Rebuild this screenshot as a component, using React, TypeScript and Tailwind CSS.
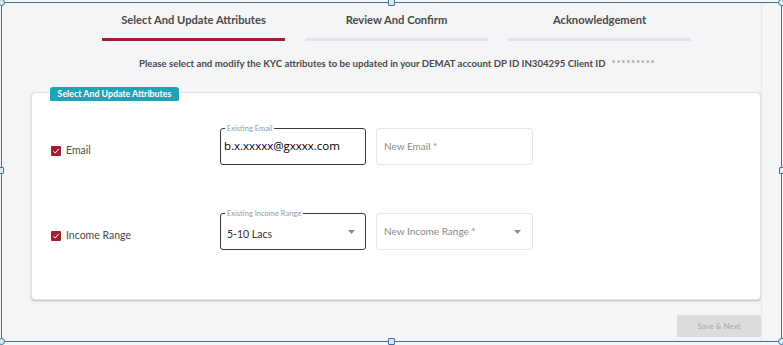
import React from "react";

type Tab = { label: string; active: boolean };

const tabs: Tab[] = [
  { label: "Select And Update Attributes", active: true },
  { label: "Review And Confirm", active: false },
  { label: "Acknowledgement", active: false },
];

function Caret() {
  return (
    <svg width="7" height="4" viewBox="0 0 7 4" className="shrink-0">
      <path d="M0 0 L7 0 L3.5 4 Z" fill="#8c8c8c" />
    </svg>
  );
}

function CheckBox() {
  return (
    <div className="w-[10px] h-[10px] bg-[#a51c30] rounded-[1px] flex items-center justify-center">
      <svg width="8" height="8" viewBox="0 0 8 8">
        <path d="M1.3 4.2 L3.2 6 L6.8 1.8" stroke="#fff" strokeWidth="1" fill="none" />
      </svg>
    </div>
  );
}

function Handle({ className, round }: { className: string; round?: boolean }) {
  return (
    <div
      className={`absolute w-[7px] h-[7px] border border-[#41719c] bg-[#dbeaf7] ${round ? "rounded-full" : "rounded-[1px]"} ${className}`}
    />
  );
}

/* ── Campo existente (outlined, con leyenda) ── */
function ExistingField({
  legend,
  children,
  select,
}: {
  legend: string;
  children: React.ReactNode;
  select?: boolean;
}) {
  return (
    <div className="relative w-[146px] h-[37px] border border-[#3a3a3a] rounded-[3px] bg-white flex items-center pl-[3px] pr-[10px]">
      <span className="absolute -top-[5px] left-[4px] bg-white px-[2px] text-[7.5px] leading-[9px] text-[#9a9a9a]">
        {legend}
      </span>
      <div className="flex-1">{children}</div>
      {select && <Caret />}
    </div>
  );
}

function NewField({ placeholder, select }: { placeholder: string; select?: boolean }) {
  return (
    <div className="w-[157px] h-[37px] border border-[#e6e6e6] rounded-[3px] bg-white flex items-center pl-[7px] pr-[11px]">
      <span className="flex-1 text-[10px] text-[#8a8a8a]">{placeholder}</span>
      {select && <Caret />}
    </div>
  );
}

function AttributeRow({
  label,
  existing,
  children,
  placeholder,
  select,
}: {
  label: string;
  existing: string;
  children: React.ReactNode;
  placeholder: string;
  select?: boolean;
}) {
  return (
    <div className="flex items-center">
      <div className="relative top-[4px] w-[188px] flex items-center gap-[5px] pl-[19px]">
        <CheckBox />
        <span className="text-[10.5px] text-[#4a4a4a]">{label}</span>
      </div>
      <div className="flex gap-[10px]">
        <ExistingField legend={existing} select={select}>
          {children}
        </ExistingField>
        <NewField placeholder={placeholder} select={select} />
      </div>
    </div>
  );
}

export default function App() {
  return (
    <div className="relative w-[783px] h-[345px] bg-[#f4f5f7] overflow-hidden font-['Lato',sans-serif]">
      {/* Tabs */}
      <div className="flex gap-[20px] pl-[102px] pt-[12px]">
        {tabs.map((t) => (
          <div key={t.label} className="w-[183px] flex flex-col items-center">
            <span className="text-[11.2px] leading-[16px] font-bold text-[#4a4a4a]">
              {t.label}
            </span>
            <div
              className={`mt-[10px] w-full h-[3px] ${t.active ? "bg-[#a51c30]" : "bg-[#e3e4e7]"}`}
            />
          </div>
        ))}
      </div>

      {/* Instruccion */}
      <p className="pl-[139px] mt-[16px] text-[9.65px] leading-[12px] font-bold text-[#4a4a4a]">
        Please select and modify the KYC attributes to be updated in your DEMAT account DP ID IN304295 Client ID
        <span className="ml-[6px] font-normal text-[#8a8a8a] tracking-[0.8px]">*********</span>
      </p>

      {/* Card */}
      <div className="relative ml-[31px] mt-[23px] w-[730px] h-[208px] bg-white rounded-[4px] border border-[#e2e2e2] shadow-[0_1px_2px_rgba(0,0,0,0.25)]">
        <div className="absolute -top-[6px] left-[18px] w-[129px] h-[14px] bg-[#1fa4b6] rounded-t-[3px] rounded-b-[1px] flex items-center justify-center">
          <span className="text-[8.8px] font-bold text-white">Select And Update Attributes</span>
        </div>

        <div className="pt-[35px] flex flex-col gap-[48px]">
          <AttributeRow label="Email" existing="Existing Email" placeholder="New Email *">
            <span className="font-['Open_Sans',sans-serif] text-[11.5px] text-black leading-none relative -top-[3px]">
              b.x.xxxxx@gxxxx.com
            </span>
          </AttributeRow>
          <AttributeRow
            label="Income Range"
            existing="Existing Income Range"
            placeholder="New Income Range *"
            select
          >
            <span className="pl-[3px] text-[10.5px] text-[#333]">5-10 Lacs</span>
          </AttributeRow>
        </div>
      </div>

      {/* Boton */}
      <div className="flex justify-end pr-[22px] mt-[15px]">
        <button className="w-[84px] h-[22px] bg-[#dcdcdc] rounded-[2px] text-[8px] text-[#a9a9a9]">
          Save &amp; Next
        </button>
      </div>

      {/* Marco de seleccion */}
      <div className="absolute left-[1px] top-[2px] w-[781px] h-[340px] border-[1.5px] border-[#41719c] pointer-events-none" />
      <div className="absolute left-[761px] top-[3px] w-px h-[338px] bg-[#e6e7ea]" />
      <Handle round className="-left-[2px] -top-[1px]" />
      <Handle round className="right-[-2px] -top-[1px]" />
      <Handle className="left-[388px] -top-[1px]" />
      <Handle className="-left-[3px] top-[167px]" />
      <Handle className="right-[-3px] top-[167px]" />
      <Handle round className="-left-[2px] top-[338px]" />
      <Handle round className="right-[-2px] top-[338px]" />
      <Handle className="left-[388px] top-[338px]" />
    </div>
  );
}
